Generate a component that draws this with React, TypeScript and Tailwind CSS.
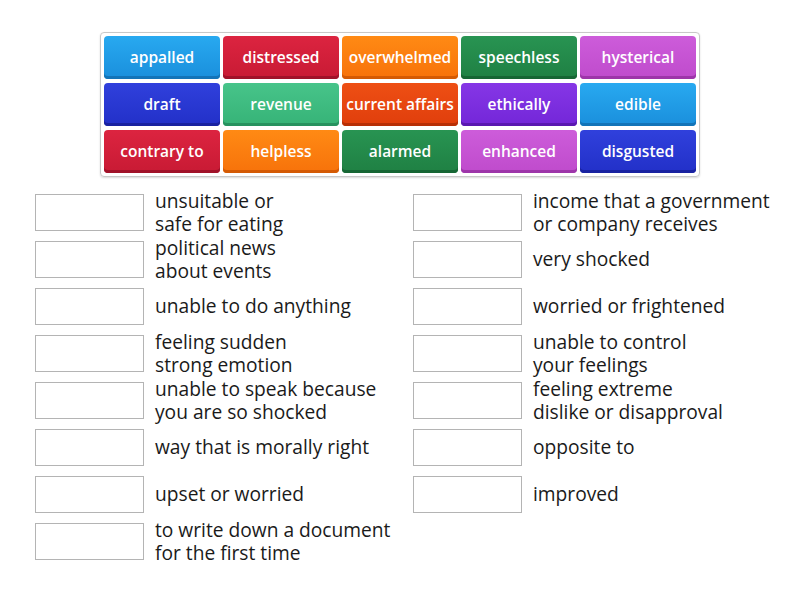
import React from 'react';

type Tile = { label: string; bg: string };

const lightBlue = 'bg-gradient-to-b from-[#28a9f0] to-[#1a8fdc] shadow-[inset_0_-3px_0_#1374b8]';
const red = 'bg-gradient-to-b from-[#dc2440] to-[#c81a34] shadow-[inset_0_-3px_0_#a01229]';
const orange = 'bg-gradient-to-b from-[#ff8a14] to-[#f7720a] shadow-[inset_0_-3px_0_#d45a04]';
const green = 'bg-gradient-to-b from-[#289452] to-[#1f8043] shadow-[inset_0_-3px_0_#166634]';
const magenta = 'bg-gradient-to-b from-[#cd5cda] to-[#bf4bcc] shadow-[inset_0_-3px_0_#9d35a9]';
const blue = 'bg-gradient-to-b from-[#3040dc] to-[#2230c8] shadow-[inset_0_-3px_0_#1922a0]';
const mint = 'bg-gradient-to-b from-[#47c48a] to-[#36b377] shadow-[inset_0_-3px_0_#27925f]';
const orangeRed = 'bg-gradient-to-b from-[#ee4f14] to-[#e03e0c] shadow-[inset_0_-3px_0_#b82f06]';
const purple = 'bg-gradient-to-b from-[#8636e6] to-[#7326d8] shadow-[inset_0_-3px_0_#5a18b0]';

const tiles: Tile[] = [
  { label: 'appalled', bg: lightBlue },
  { label: 'distressed', bg: red },
  { label: 'overwhelmed', bg: orange },
  { label: 'speechless', bg: green },
  { label: 'hysterical', bg: magenta },
  { label: 'draft', bg: blue },
  { label: 'revenue', bg: mint },
  { label: 'current affairs', bg: orangeRed },
  { label: 'ethically', bg: purple },
  { label: 'edible', bg: lightBlue },
  { label: 'contrary to', bg: red },
  { label: 'helpless', bg: orange },
  { label: 'alarmed', bg: green },
  { label: 'enhanced', bg: magenta },
  { label: 'disgusted', bg: blue },
];

// left / right column, row by row
const clues: [string[], string[] | null][] = [
  [['unsuitable or', 'safe for eating'], ['income that a government', 'or company receives']],
  [['political news', 'about events'], ['very shocked']],
  [['unable to do anything'], ['worried or frightened']],
  [['feeling sudden', 'strong emotion'], ['unable to control', 'your feelings']],
  [['unable to speak because', 'you are so shocked'], ['feeling extreme', 'dislike or disapproval']],
  [['way that is morally right'], ['opposite to']],
  [['upset or worried'], ['improved']],
  [['to write down a document', 'for the first time'], null],
];

function Clue({ lines }: { lines: string[] }) {
  return (
    <div className="flex items-center h-[47px]">
      <div className="w-[109px] h-[37px] shrink-0 border border-[#b4b4b4] bg-white" />
      <div className="ml-[11px] mb-[2px] text-[19.2px] leading-[23px] text-[#1a1a1a]">
        {lines.map((l) => (
          <div key={l} className="whitespace-nowrap">{l}</div>
        ))}
      </div>
    </div>
  );
}

export default function App() {
  return (
    <div className="w-[800px] h-[600px] bg-white pt-[32px] font-['Open_Sans','Noto_Sans',sans-serif]">
      {/* word bank */}
      <div className="mx-auto w-[600px] border border-[#c8c8c8] rounded-[4px] p-[3px] grid grid-cols-5 gap-x-[3px] gap-y-[4px] shadow-[0_1px_2px_rgba(0,0,0,0.15)]">
        {tiles.map((t) => (
          <div
            key={t.label}
            className={`${t.bg} h-[43px] rounded-[4px] flex items-center justify-center text-white text-[15.5px] font-semibold whitespace-nowrap`}
          >
            {t.label}
          </div>
        ))}
      </div>

      {/* matching clues */}
      <div className="mt-[12px] ml-[35px] grid grid-cols-[378px_378px]">
        {clues.map(([l, r], i) => (
          <React.Fragment key={i}>
            <Clue lines={l} />
            {r ? <Clue lines={r} /> : <div />}
          </React.Fragment>
        ))}
      </div>
    </div>
  );
}
